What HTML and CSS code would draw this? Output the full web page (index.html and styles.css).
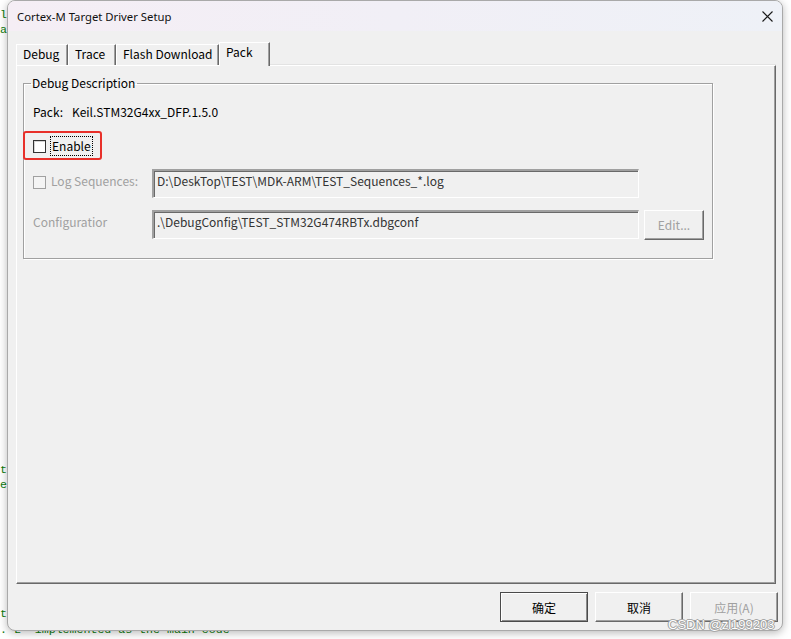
FILE: index.html
```html
<!DOCTYPE html>
<html>
<head>
<meta charset="utf-8">
<link rel="stylesheet" href="styles.css">
</head>
<body>
<div class="desk">
  <div class="code">
    <div class="cl l1">l1</div>
    <div class="cl l2">a</div>
    <div class="cl l3">t</div>
    <div class="cl l4">e</div>
    <div class="cl l5">t</div>
    <div class="cl l6">. L- implemented as the main code</div>
  </div>

  <div class="dialog">
    <div class="titlebar">
      <span class="title">Cortex-M Target Driver Setup</span>
      <svg class="close" width="11" height="11" viewBox="0 0 11 11"><path d="M0.5 0.5 L10.5 10.5 M10.5 0.5 L0.5 10.5" stroke="#1a1a1a" stroke-width="1.1" fill="none"/></svg>
    </div>
    <div class="client">
      <div class="tabs">
        <div class="tab t-debug">Debug</div>
        <div class="tab t-trace">Trace</div>
        <div class="tab t-flash">Flash Download</div>
        <div class="tab t-pack active">Pack</div>
      </div>
      <div class="panel">
        <fieldset class="group">
          <legend>Debug Description</legend>
          <div class="pack"><span class="pk">Pack:</span><span>Keil.STM32G4xx_DFP.1.5.0</span></div>
          <div class="row r-enable">
            <span class="cb"></span><span class="focus">Enable</span>
          </div>
          <div class="row r-log">
            <span class="cb dis up"></span><span class="lbl dim up">Log Sequences:</span>
            <div class="edit">D:\DeskTop\TEST\MDK-ARM\TEST_Sequences_*.log</div>
          </div>
          <div class="row r-cfg">
            <span class="lbl dim cfg up">Configuratior</span>
            <div class="edit">.\DebugConfig\TEST_STM32G474RBTx.dbgconf</div>
            <div class="btn small dim">Edit...</div>
          </div>
        </fieldset>
      </div>
      <div class="buttons">
        <div class="btn big default">确定</div>
        <div class="btn big">取消</div>
        <div class="btn big dim">应用(A)</div>
      </div>
    </div>
    <div class="highlight"></div>
  </div>
  <div class="mark">CSDN @zl199203</div>
</div>
</body>
</html>
```
FILE: styles.css
```css
html, body {
  margin: 0;
  padding: 0;
  background: #ffffff;
}
.desk {
  position: relative;
  width: 791px;
  height: 639px;
  overflow: hidden;
  background: #ffffff;
}
.code {
  position: absolute;
  left: 0;
  top: 0;
  font-family: "Liberation Mono", monospace;
  font-size: 11.6px;
  color: #0a7a0a;
}
.cl {
  position: absolute;
  white-space: pre;
  line-height: 14px;
}
.l1 { left: 0px; top: 8px; }
.l2 { left: 0px; top: 23px; }
.l3 { left: 0px; top: 463px; }
.l4 { left: 0px; top: 478px; }
.l5 { left: 0px; top: 607px; }
.l6 { left: 0px; top: 623px; }

.dialog {
  position: absolute;
  left: 7px;
  top: 0;
  width: 776px;
  height: 631px;
  box-sizing: border-box;
  border: 1px solid #a9a9a9;
  border-radius: 8px;
  background: #f0f0f0;
  box-shadow: 0 2px 8px rgba(0, 0, 0, 0.28);
  overflow: hidden;
  font-family: "Noto Sans CJK SC", "Noto Sans", sans-serif;
  font-size: 12px;
  color: #000;
}
.titlebar {
  height: 30px;
  background: linear-gradient(90deg, #f5eef5 0%, #f1eff6 50%, #eef1f7 100%);
  display: flex;
  align-items: center;
  justify-content: space-between;
  padding: 0 9px 0 9px;
}
.title {
  font-family: "Noto Sans", sans-serif;
  font-size: 11.3px;
  color: #111;
}
.close {
  display: block;
}
.client {
  padding: 10px 6px 0 8px;
}
.tabs {
  display: flex;
  align-items: flex-end;
  height: 24px;
  position: relative;
  z-index: 2;
}
.tab {
  box-sizing: border-box;
  height: 21px;
  border-top: 1px solid #ffffff;
  border-left: 1px solid #ffffff;
  border-right: 1px solid #696969;
  box-shadow: inset -1px 0 0 #a0a0a0;
  padding: 0 0 0 6px;
  line-height: 18px;
  background: #f0f0f0;
  font-size: 12px;
  color: #000;
}
.t-debug { width: 52px; }
.t-trace { width: 48px; }
.t-flash { width: 103px; }
.t-pack { width: 51px; }
.tab.active {
  height: 24px;
  margin-bottom: -1px;
  line-height: 18px;
  padding-left: 6px;
}
.panel {
  box-sizing: border-box;
  width: 760px;
  height: 519px;
  border-top: 1px solid #ffffff;
  border-left: 1px solid #ffffff;
  border-right: 1px solid #696969;
  border-bottom: 1px solid #696969;
  box-shadow: inset -1px -1px 0 #a0a0a0, 0 -1px 0 #e3e3e3;
  padding: 10px 0 0 6px;
}
.group {
  box-sizing: border-box;
  width: 690px;
  height: 183px;
  margin: 0;
  border: 1px solid #a0a0a0;
  box-shadow: 1px 1px 0 #ffffff, inset 1px 1px 0 #ffffff;
  padding: 0 0 0 9px;
}
.group legend {
  padding: 0 2px 0 1px;
  margin-left: -2px;
  font-size: 12px;
  line-height: 14px;
}
.pack {
  margin-top: 14px;
  height: 16px;
  line-height: 16px;
  display: flex;
}
.pk {
  width: 39px;
}
.row {
  display: flex;
  align-items: center;
}
.r-enable {
  margin-top: 16px;
  height: 20px;
}
.cb {
  box-sizing: border-box;
  width: 13px;
  height: 13px;
  border: 1px solid #333333;
  background: #ffffff;
  box-shadow: inset 1px 1px 0 #d4d4d4;
  margin-right: 5px;
  flex: none;
}
.cb.dis {
  border-color: #a0a0a0;
  background: #f4f4f4;
  box-shadow: none;
}
.cb.up {
  align-self: flex-start;
  margin-top: 7px;
}
.lbl.up {
  align-self: flex-start;
  margin-top: 4px;
}
.focus {
  outline: 1px dotted #000;
  outline-offset: 0;
  padding: 0 1px;
  line-height: 18px;
}
.lbl {
  line-height: 16px;
}
.dim {
  color: #a0a0a0;
}
.r-log {
  margin-top: 13px;
  height: 29px;
}
.r-log .lbl {
  width: 101px;
}
.edit {
  box-sizing: border-box;
  width: 487px;
  height: 29px;
  border-top: 2px solid #a0a0a0;
  border-left: 2px solid #a0a0a0;
  border-right: 1px solid #ffffff;
  border-bottom: 1px solid #ffffff;
  box-shadow: inset 1px 1px 0 #696969;
  padding: 2px 0 0 3px;
  line-height: 16px;
  color: #333333;
  background: #f0f0f0;
}
.r-cfg {
  margin-top: 12px;
  height: 29px;
}
.cfg {
  width: 119px;
}
.btn {
  box-sizing: border-box;
  border-top: 1px solid #ffffff;
  border-left: 1px solid #ffffff;
  border-right: 1px solid #696969;
  border-bottom: 1px solid #696969;
  box-shadow: inset -1px -1px 0 #a0a0a0;
  background: #f0f0f0;
  display: flex;
  align-items: center;
  justify-content: center;
}
.small {
  width: 60px;
  height: 30px;
  margin-left: 5px;
  font-size: 12px;
}
.buttons {
  display: flex;
  justify-content: flex-end;
  gap: 7px;
  padding-top: 8px;
  width: 762px;
}
.big {
  width: 88px;
  height: 30px;
  font-size: 12px;
}
.btn.default {
  border: 1px solid #4b4b4b;
  box-shadow: inset 1px 1px 0 #ffffff, inset -1px -1px 0 #8a8a8a;
}
.highlight {
  position: absolute;
  left: 15px;
  top: 130px;
  width: 79px;
  height: 29px;
  box-sizing: border-box;
  border: 2px solid #e8302a;
  border-radius: 3px;
}
.mark {
  position: absolute;
  left: 668px;
  top: 617px;
  font-family: "Liberation Sans", sans-serif;
  font-size: 13px;
  color: #ffffff;
  text-shadow: 0 0 1px #8a8a8a, 0 0 1px #8a8a8a, 1px 0 0 #b0b0b0, -1px 0 0 #b0b0b0, 0 1px 0 #b0b0b0, 0 -1px 0 #b0b0b0;
}
```
